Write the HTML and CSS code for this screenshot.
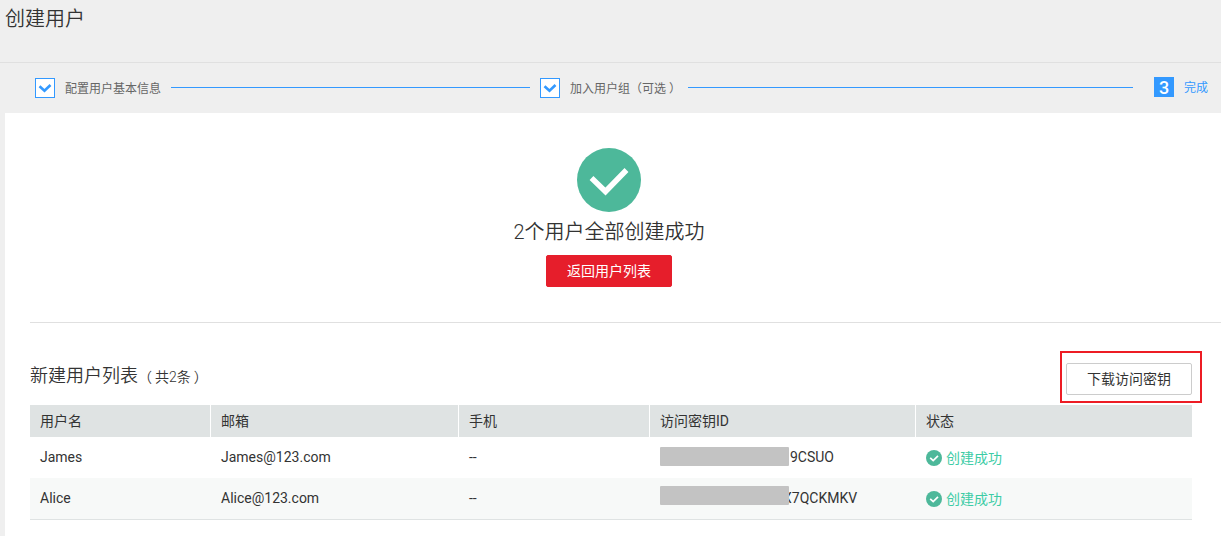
FILE: index.html
```html
<!DOCTYPE html>
<html lang="zh-CN">
<head>
<meta charset="utf-8">
<title>创建用户</title>
<link rel="stylesheet" href="styles.css">
</head>
<body>
<header class="page-header"><h1 class="page-title">创建用户</h1></header>
<nav class="steps">
  <span class="step-box"><svg class="step-check" viewBox="0 0 18 18"><path d="M3.500 7.300l5 4.500 6-5.800"/></svg></span>
  <span class="step-label">配置用户基本信息</span>
  <span class="step-line line-first"></span>
  <span class="step-box"><svg class="step-check" viewBox="0 0 18 18"><path d="M3.500 7.300l5 4.500 6-5.800"/></svg></span>
  <span class="step-label wide">加入用户组（可选<span class="paren-close">）</span></span>
  <span class="step-line line-second"></span>
  <span class="step-box current">3</span>
  <span class="step-label active">完成</span>
</nav>
<main class="panel">
  <section class="result">
    <svg class="result-icon" viewBox="0 0 64 64"><circle cx="32" cy="32" r="32" fill="#4db89a"/><path d="M14.500 30L28.500 43.500 49.500 22" fill="none" stroke="#fff" stroke-width="5.500"/></svg>
    <p class="result-text">2个用户全部创建成功</p>
    <button class="btn primary">返回用户列表</button>
  </section>
  <section class="list">
    <div class="list-head">
      <h2 class="list-title">新建用户列表<span class="list-count"><span class="paren-open">（</span>共2条<span class="paren-close">）</span></span></h2>
      <div class="highlight"><button class="btn">下载访问密钥</button></div>
    </div>
    <div class="table">
      <div class="row head"><div class="cell">用户名</div><div class="cell">邮箱</div><div class="cell">手机</div><div class="cell">访问密钥ID</div><div class="cell">状态</div></div>
      <div class="row">
        <div class="cell">James</div><div class="cell">James@123.com</div><div class="cell">--</div>
        <div class="cell key"><span class="mask"></span><span class="key-tail">9CSUO</span></div>
        <div class="cell status"><svg class="status-icon" viewBox="0 0 16 16"><circle cx="8" cy="8" r="8" fill="#4db89a"/><path d="M4.200 7.800L7.200 10.600 12 5.800" fill="none" stroke="#fff" stroke-width="1.700"/></svg>创建成功</div>
      </div>
      <div class="row alt">
        <div class="cell">Alice</div><div class="cell">Alice@123.com</div><div class="cell">--</div>
        <div class="cell key"><span class="mask"></span><span class="key-tail covered">X7QCKMKV</span></div>
        <div class="cell status"><svg class="status-icon" viewBox="0 0 16 16"><circle cx="8" cy="8" r="8" fill="#4db89a"/><path d="M4.200 7.800L7.200 10.600 12 5.800" fill="none" stroke="#fff" stroke-width="1.700"/></svg>创建成功</div>
      </div>
    </div>
  </section>
</main>
</body>
</html>
```
FILE: styles.css
```css
* { box-sizing: border-box; }
body {
  margin: 0;
  height: 536px;
  overflow: hidden;
  background: #efefef;
  color: #333;
  font: 14px/20px Roboto, "Noto Sans CJK SC", sans-serif;
}
h1, h2, p { margin: 0; font-weight: 350; }
svg { display: block; }
.page-header { height: 63px; padding: 5px 5px; border-bottom: 1px solid #e0e0e0; }
.page-title { font-size: 20px; line-height: 28px; }
.steps { display: flex; height: 50px; padding: 15px 0 0 35px; font-size: 12px; color: #666; white-space: nowrap; }
.step-box { flex: none; width: 20px; height: 20px; border: 1px solid #39f; background: #fff; }
.step-check { width: 18px; height: 18px; fill: none; stroke: #39f; stroke-width: 2.6; }
.step-label { margin-left: 10px; line-height: 22px; }
.wide { width: 108px; }
.step-line { flex: none; height: 1px; margin-top: 9px; background: #39f; }
.line-first { width: 359px; margin-left: 10px; margin-right: 10px; }
.line-second { width: 445px; margin-left: 10px; margin-right: 21px; }
.current { height: 20px; margin-top: -1px; background: #39f; color: #fff; font-size: 18px; font-weight: 500; line-height: 19px; text-align: center; }
.active { color: #39f; line-height: 21px; }
.paren-open { letter-spacing: 3px; }
.paren-close { margin-left: 3px; }
.panel { height: 423px; margin-left: 5px; padding-left: 25px; background: #fff; }
.result { display: flex; flex-direction: column; align-items: center; height: 210px; padding: 35px 33px 0 0; border-bottom: 1px solid #e0e0e0; }
.result-icon { width: 64px; height: 64px; }
.result-text { margin-top: 5px; font-size: 20px; line-height: 30px; }
.btn { width: 126px; height: 32px; padding: 0; border: 1px solid #ccc; border-radius: 2px; background: #fff; color: #333; font: inherit; }
.primary { margin-top: 8px; border-color: #e61e2b; background: #e61e2b; color: #fff; }
.list { width: 1172px; padding-top: 28px; }
.list-head { display: flex; justify-content: space-between; height: 54px; }
.list-title { padding-top: 11px; font-size: 18px; line-height: 28px; }
.list-count { font-size: 14px; }
.highlight { width: 142px; height: 52px; padding: 10px 4px; border: 2px solid #ed1c24; }
.table { width: 1162px; border-bottom: 1px solid #dfe3e3; }
.row { display: grid; grid-template-columns: 180px 248px 191px 266px 277px; height: 41px; line-height: 40px; }
.cell { padding-left: 11px; white-space: nowrap; }
.cell:first-child { padding-left: 10px; }
.head { height: 32px; line-height: 32px; background: #dfe3e3; }
.head .cell + .cell { padding-left: 10px; border-left: 1px solid #fff; }
.alt { background: #f7f9f8; }
.key { display: flex; align-items: flex-start; }
.mask { position: relative; z-index: 1; width: 129px; height: 19px; margin-top: 10px; border-radius: 1px; background: #c3c3c3; }
.alt .mask { margin-top: 8px; }
.key-tail { margin-left: 1px; }
.covered { margin-left: -6px; }
.status { display: flex; align-items: center; gap: 4px; padding-top: 1px; color: #3dcca6; }
.status-icon { width: 16px; height: 16px; }
```
